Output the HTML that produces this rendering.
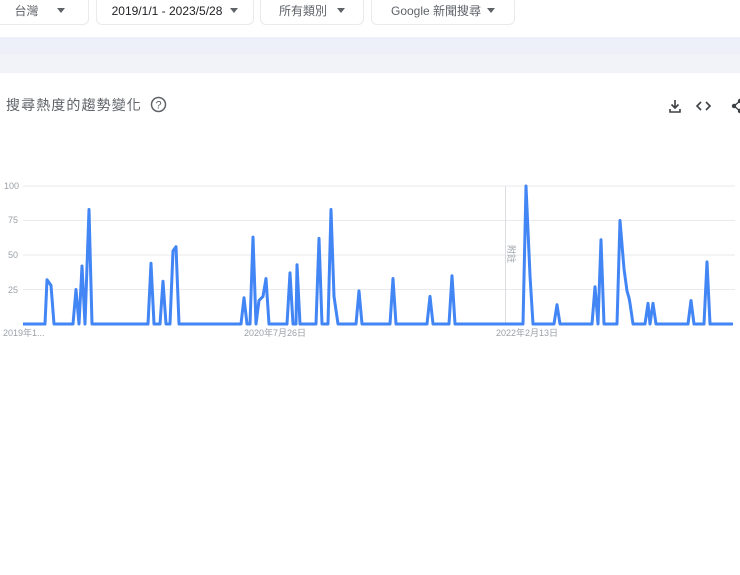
<!DOCTYPE html>
<html><head><meta charset="utf-8"><style>
body{margin:0;width:740px;height:575px;background:#fff;font-family:"Liberation Sans","Noto Sans CJK TC",sans-serif;position:relative;overflow:hidden}
.b{position:absolute;top:-4px;height:29px;border:1px solid #e8eaed;border-radius:6px;background:#fff;font-size:12px;color:#3c4043;display:flex;align-items:center;justify-content:center;box-sizing:border-box}
.b i{display:inline-block;width:0;height:0;border-left:4px solid transparent;border-right:4px solid transparent;border-top:5px solid #5f6368;margin-left:10px}
.ax{position:absolute;font-size:9px;color:#9aa0a6}
</style></head><body>
<div class="b" style="left:-10px;width:99px;color:#5f6368">台灣 <i style="margin-left:18px"></i></div>
<div class="b" style="left:96px;width:158px;color:#202124">2019/1/1 - 2023/5/28<i style="margin-left:8px"></i></div>
<div class="b" style="left:260px;width:104px;color:#5f6368">所有類別<i></i></div>
<div class="b" style="left:371px;width:144px;color:#5f6368">Google 新聞搜尋<i style="margin-left:6px"></i></div>
<div style="position:absolute;left:0;top:37px;width:740px;height:36px;background:#eef0f9"></div>
<div style="position:absolute;left:0;top:54px;width:740px;height:19px;background:#f1f3f8"></div>
<div style="position:absolute;left:6px;top:95px;font-size:14px;color:#5f6368;letter-spacing:1.1px">搜尋熱度的趨勢變化</div>
<svg style="position:absolute;left:150px;top:96px" width="17" height="17" viewBox="0 0 17 17"><circle cx="8.5" cy="8.5" r="7" fill="none" stroke="#5f6368" stroke-width="1.5"/><text x="8.5" y="12.5" font-size="11" text-anchor="middle" fill="#5f6368" font-family="Liberation Sans">?</text></svg>
<svg style="position:absolute;left:668px;top:98px" width="72" height="16" viewBox="0 0 72 16">
<path d="M7 2v8M3.5 6.5L7 10l3.5-3.5M2 11v3h10v-3" fill="none" stroke="#3c4043" stroke-width="1.6"/>
<path d="M33 4l-4 4 4 4M38 4l4 4-4 4" fill="none" stroke="#3c4043" stroke-width="1.6"/>
<path d="M72 3l-6 5 6 5" fill="none" stroke="#3c4043" stroke-width="1.4"/><circle cx="66" cy="8" r="2.2" fill="#3c4043"/><circle cx="72" cy="3" r="2.2" fill="#3c4043"/><circle cx="72" cy="13" r="2.2" fill="#3c4043"/>
</svg>
<svg style="position:absolute;left:0;top:0" width="740" height="340">
<g stroke="#e8eaed" stroke-width="1"><line x1="23" x2="735" y1="186" y2="186"/><line x1="23" x2="735" y1="220.5" y2="220.5"/><line x1="23" x2="735" y1="255" y2="255"/><line x1="23" x2="735" y1="289.5" y2="289.5"/></g>
<line x1="505.5" x2="505.5" y1="186" y2="324" stroke="#dadce0"/>
<text x="0" y="0" transform="translate(508,245) rotate(90)" font-size="9" fill="#9aa0a6" font-family="Liberation Sans,Noto Sans CJK TC">附註</text>
<polyline fill="none" stroke="#4285f4" stroke-width="3" stroke-linejoin="round" points="23,324 45,324 47,279.8 51,285.4 54,324 73,324 76,289.5 79,324 82,266 85,324 89,209.5 92,324 148,324 151,263.3 154,324 160,324 163,281.2 166,324 170,324 173,250.9 176,246.7 179,324 241,324 244,297.8 247,324 250,324 253,237.1 256,324 259,300.5 263,296.4 266,278.5 269,324 287,324 290,272.9 293,324 296,324 297,264.7 300,324 316,324 319,238.4 322,324 328,324 331,209.5 334,296.4 338,324 356,324 359,290.9 362,324 390,324 393,278.5 396,324 427,324 430,296.4 433,324 449,324 452,275.7 455,324 523,324 526,186 530,275.7 533,324 554,324 557,304.7 560,324 592,324 595,286.7 598,324 601,239.8 604,324 617,324 620,220.5 624,268.8 627,290.9 629,297.8 630,303.3 633,324 645,324 648,303.3 650,324 653,303.3 656,324 688,324 691,300.5 694,324 704,324 707,261.9 710,324 733,324"/>
</svg>
<div class="ax" style="left:4px;top:181px">100</div>
<div class="ax" style="left:8px;top:215px">75</div>
<div class="ax" style="left:8px;top:250px">50</div>
<div class="ax" style="left:8px;top:285px">25</div>
<div class="ax" style="left:3px;top:326px">2019年1...</div>
<div class="ax" style="left:244px;top:326px">2020年7月26日</div>
<div class="ax" style="left:496px;top:326px">2022年2月13日</div>
</body></html>
